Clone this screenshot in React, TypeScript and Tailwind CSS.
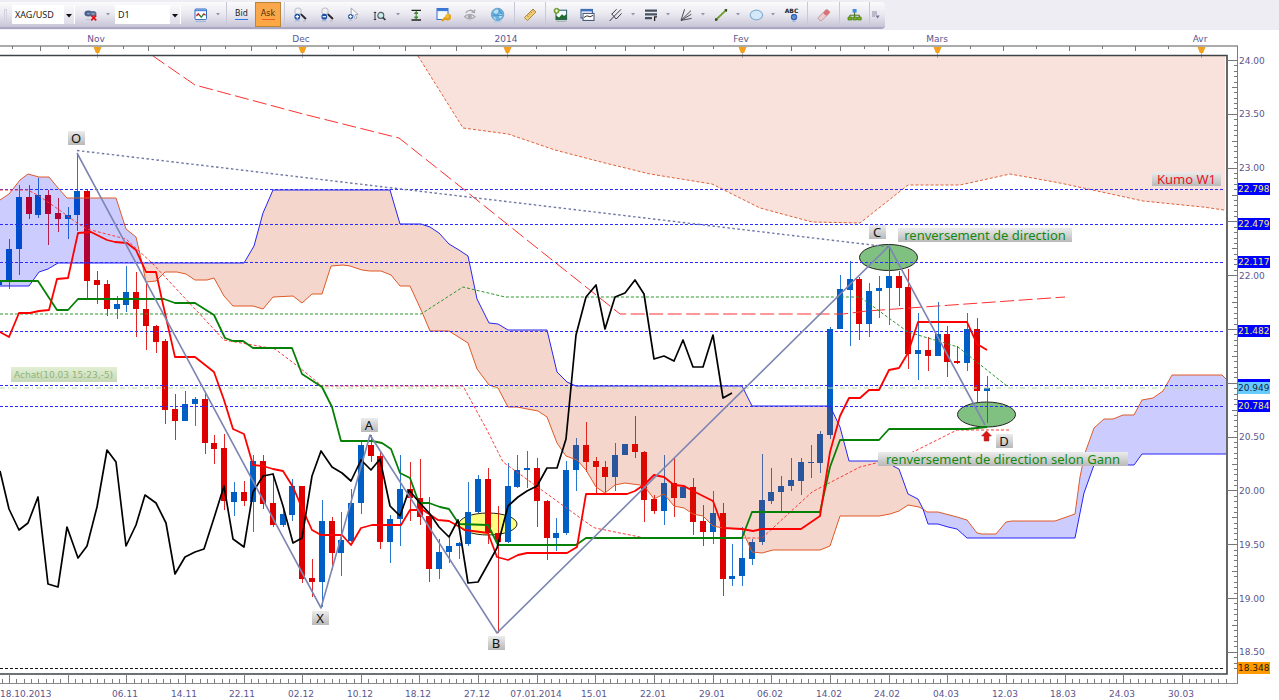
import type { ReactNode } from 'react'

/**
 * Trading chart: drawing toolbar on top, XAG/USD daily candles below with
 * Ichimoku overlays, price levels and annotations.
 */

type Candle = [high: number, top: number, bottom: number, low: number, dir: 'u' | 'd']
type Point = [number, number]

const FIRST_X = 9
const STEP = 9.775
const UP = '#005fc4'
const DOWN = '#de0000'

/* [high, body top, body bottom, low, direction], in chart units */
const candles: Candle[] = [
  [239, 249, 281, 289, 'u'], [185, 197, 249, 275, 'u'], [185, 197, 214, 219, 'd'], [178, 195, 215, 218, 'u'],
  [190, 195, 214, 245, 'd'], [198, 213, 219, 232, 'd'], [207, 215, 219, 239, 'u'], [154, 191, 215, 231, 'u'],
  [190, 191, 281, 298, 'd'], [271, 280, 285, 304, 'd'], [280, 284, 309, 316, 'd'], [296, 304, 309, 319, 'u'],
  [266, 292, 305, 312, 'u'], [272, 292, 309, 337, 'd'], [282, 309, 326, 350, 'd'], [325, 326, 342, 353, 'd'],
  [339, 341, 410, 424, 'd'], [394, 409, 421, 440, 'd'], [391, 404, 421, 421, 'u'], [397, 399, 404, 426, 'u'],
  [392, 399, 443, 454, 'd'], [435, 443, 449, 464, 'd'], [434, 448, 501, 510, 'd'], [482, 492, 502, 516, 'u'],
  [481, 492, 501, 506, 'd'], [455, 461, 502, 532, 'u'], [455, 461, 504, 509, 'd'], [473, 503, 525, 527, 'd'],
  [508, 514, 525, 527, 'u'], [479, 486, 515, 521, 'u'], [486, 486, 579, 583, 'd'], [559, 578, 582, 597, 'd'],
  [500, 521, 582, 607, 'u'], [517, 521, 553, 570, 'd'], [512, 540, 553, 576, 'u'], [489, 503, 541, 542, 'u'],
  [440, 445, 503, 514, 'u'], [435, 445, 456, 462, 'd'], [452, 456, 542, 549, 'd'], [515, 519, 542, 563, 'u'],
  [455, 489, 519, 546, 'u'], [462, 489, 498, 521, 'd'], [459, 498, 517, 525, 'd'], [497, 516, 569, 582, 'd'],
  [539, 552, 569, 579, 'u'], [535, 546, 552, 563, 'u'], [542, 543, 546, 559, 'u'], [482, 512, 544, 546, 'u'],
  [475, 479, 512, 513, 'u'], [468, 479, 533, 544, 'd'], [506, 533, 542, 633, 'd'], [463, 486, 542, 543, 'u'],
  [455, 470, 487, 488, 'u'], [451, 468, 470, 488, 'u'], [458, 468, 501, 527, 'd'], [500, 501, 538, 560, 'd'],
  [518, 533, 538, 551, 'u'], [461, 470, 533, 535, 'u'], [438, 445, 470, 491, 'u'], [422, 445, 462, 472, 'd'],
  [457, 461, 467, 493, 'd'], [461, 467, 477, 492, 'd'], [443, 455, 477, 491, 'u'], [444, 444, 455, 455, 'u'],
  [416, 444, 452, 458, 'd'], [451, 452, 500, 522, 'd'], [495, 499, 511, 514, 'd'], [455, 483, 511, 525, 'u'],
  [457, 483, 498, 517, 'd'], [485, 487, 498, 498, 'u'], [478, 487, 522, 535, 'd'], [505, 521, 532, 546, 'd'],
  [491, 513, 532, 544, 'u'], [503, 513, 579, 596, 'd'], [544, 576, 579, 586, 'u'], [527, 558, 576, 586, 'u'],
  [539, 542, 559, 565, 'u'], [454, 500, 542, 545, 'u'], [468, 492, 501, 504, 'u'], [476, 486, 492, 513, 'u'],
  [458, 480, 486, 491, 'u'], [458, 462, 481, 495, 'u'], [445, 462, 463, 478, 'u'], [431, 434, 463, 473, 'u'],
  [327, 329, 435, 439, 'u'], [275, 289, 329, 329, 'u'], [261, 279, 290, 346, 'u'], [277, 279, 324, 340, 'd'],
  [283, 291, 324, 337, 'u'], [276, 288, 291, 318, 'u'], [247, 276, 288, 325, 'u'], [271, 276, 288, 306, 'd'],
  [269, 287, 354, 369, 'd'], [313, 350, 354, 380, 'u'], [337, 350, 356, 371, 'd'], [302, 334, 356, 356, 'u'],
  [326, 334, 362, 377, 'd'], [346, 361, 363, 364, 'd'], [313, 329, 363, 371, 'u'], [318, 329, 391, 403, 'd'],
  [376, 388, 391, 423, 'u'],
]

const tenkan: Point[] = [
  [0, 332], [9, 337], [19, 313], [30, 313], [39, 311], [49, 310], [57, 279], [68, 278], [78, 233], [91, 232],
  [107, 240], [115, 242], [127, 243], [136, 250], [146, 272], [156, 272], [162, 300], [175, 357], [195, 357],
  [214, 372], [224, 400], [233, 429], [244, 434], [253, 465], [263, 466], [273, 469], [283, 471], [293, 487],
  [302, 508], [312, 530], [321, 535], [342, 535], [351, 545], [361, 528], [372, 525], [401, 525], [410, 510],
  [423, 510], [438, 520], [449, 521], [465, 530], [488, 533], [497, 557], [508, 560], [518, 555], [527, 553],
  [567, 553], [577, 547], [586, 494], [627, 494], [635, 491], [645, 484], [654, 475], [664, 477], [674, 485],
  [684, 486], [693, 491], [713, 501], [723, 528], [742, 529], [753, 531], [762, 529], [801, 529], [820, 516],
  [830, 452], [840, 416], [849, 398], [860, 398], [869, 390], [879, 390], [889, 370], [899, 368], [908, 353],
  [918, 322], [967, 322], [977, 344], [987, 350],
]

const kijun: Point[] = [
  [0, 281], [38, 281], [57, 310], [68, 310], [78, 299], [164, 299], [175, 303], [195, 303], [214, 315], [225, 338],
  [233, 341], [243, 341], [253, 348], [292, 348], [302, 374], [322, 387], [332, 407], [341, 441], [372, 441],
  [382, 443], [391, 449], [400, 473], [410, 478], [419, 503], [429, 503], [440, 507], [449, 509], [459, 524],
  [488, 525], [498, 545], [576, 545], [586, 538], [742, 538], [752, 512], [820, 512], [830, 467], [840, 440],
  [879, 440], [889, 429], [967, 429], [987, 427],
]

const chikou: Point[] = [
  [0, 471], [9, 509], [19, 530], [28, 523], [38, 497], [48, 584], [58, 587], [67, 527], [78, 558], [87, 546],
  [97, 507], [107, 450], [116, 462], [126, 546], [136, 525], [145, 495], [156, 503], [166, 523], [175, 574],
  [185, 557], [195, 552], [204, 549], [214, 518], [224, 486], [233, 539], [244, 547], [253, 492], [263, 476],
  [273, 474], [283, 506], [293, 543], [302, 538], [312, 476], [321, 451], [332, 467], [342, 473], [351, 481],
  [361, 460], [371, 470], [380, 459], [390, 506], [400, 516], [409, 490], [419, 502], [430, 514], [439, 527],
  [449, 537], [458, 520], [468, 583], [478, 582], [497, 548], [508, 506], [518, 497], [527, 491], [537, 486],
  [547, 468], [557, 468], [566, 439], [576, 335], [586, 297], [596, 285], [605, 329], [615, 297], [625, 293],
  [635, 280], [644, 294], [654, 359], [664, 356], [674, 361], [683, 340], [693, 367], [703, 367], [713, 335],
  [723, 398], [732, 393],
]

/* Senkou span A (orange) and B (blue), split where they cross */
const spanA: Point[][] = [
  [[0, 200], [9, 194], [20, 180], [28, 174], [39, 177], [49, 177], [58, 188], [67, 198], [116, 198], [126, 229], [136, 237], [142, 263]],
  [
    [142, 263], [146, 282], [156, 281], [165, 272], [177, 272], [186, 274], [195, 280], [207, 280], [214, 278],
    [224, 296], [233, 306], [253, 306], [263, 309], [273, 297], [293, 296], [302, 303], [312, 294], [322, 294],
    [331, 266], [343, 265], [350, 266], [362, 270], [370, 271], [381, 271], [391, 275], [400, 286], [410, 286],
    [422, 312], [430, 331], [449, 331], [468, 343], [477, 369], [489, 385], [498, 388], [508, 407], [517, 407],
    [538, 411], [547, 417], [557, 443], [566, 456], [577, 460], [586, 470], [596, 487], [605, 493], [615, 485],
    [625, 483], [640, 485], [645, 487], [654, 499], [664, 494], [674, 506], [684, 508], [693, 514], [703, 516],
    [713, 526], [723, 528], [742, 529], [752, 552], [762, 553], [773, 550], [820, 550], [830, 546], [840, 516],
    [879, 516], [890, 514], [899, 511], [908, 505], [919, 507], [923, 509],
  ],
  [
    [923, 509], [927, 512], [938, 512], [957, 517], [967, 520], [977, 533], [982, 534], [996, 534], [1006, 522],
    [1012, 521], [1055, 521], [1075, 514], [1080, 477], [1085, 453], [1094, 428], [1104, 419], [1113, 419],
    [1123, 415], [1134, 415], [1142, 400], [1153, 398], [1163, 391], [1172, 375], [1222, 375], [1226, 379],
  ],
]

const spanB: Point[][] = [
  [[0, 286], [29, 286], [39, 272], [48, 269], [58, 263], [142, 263]],
  [
    [142, 263], [244, 263], [254, 246], [263, 213], [273, 190], [390, 190], [400, 224], [421, 224], [430, 227],
    [439, 233], [449, 244], [459, 250], [468, 256], [477, 299], [489, 323], [498, 324], [508, 330], [547, 330],
    [557, 372], [567, 382], [576, 386], [742, 386], [752, 406], [830, 406], [840, 427], [849, 461], [889, 461],
    [893, 466], [899, 469], [908, 494], [918, 499], [923, 509],
  ],
  [
    [923, 509], [928, 524], [938, 524], [948, 527], [957, 529], [967, 538], [1075, 538], [1084, 493], [1094, 465],
    [1134, 465], [1142, 454], [1226, 454],
  ],
]

const cloudFills = ['#0000ff', '#cd3200', '#0000ff']

const weeklyKumo: Point[] = [
  [418, 56], [463, 128], [508, 134], [555, 150], [605, 163], [650, 174], [712, 184], [760, 208], [812, 222],
  [860, 223], [908, 185], [960, 185], [1010, 174], [1060, 183], [1097, 191], [1143, 201], [1183, 205], [1203, 207],
  [1224, 210],
]

const dailyTenkanW: Point[] = [
  [0, 190], [28, 190], [39, 196], [58, 209], [77, 223], [87, 229], [126, 239], [153, 264], [224, 340], [253, 345],
  [275, 349], [300, 368], [322, 386], [463, 386], [487, 430], [503, 462], [590, 525], [595, 528], [645, 538],
  [762, 538], [812, 492], [833, 481], [860, 467], [880, 462], [913, 452], [957, 430], [1011, 430],
]

const weeklyKijun: Point[] = [
  [0, 314], [421, 314], [463, 287], [505, 297], [860, 297], [908, 332], [958, 347], [1007, 386],
]

const monthlyLine: Point[] = [
  [153, 56], [195, 85], [303, 114], [399, 138], [457, 184], [537, 248], [620, 314], [843, 314], [867, 311], [1065, 297],
]

const levels = [189.5, 224.5, 262.5, 331.5, 385.5, 406.5]

const priceLabels: { text: string; y: number }[] = [
  { text: '24.00', y: 61 },
  { text: '23.50', y: 114 },
  { text: '23.00', y: 168 },
  { text: '22.00', y: 276 },
  { text: '20.50', y: 437 },
  { text: '20.00', y: 491 },
  { text: '19.50', y: 545 },
  { text: '19.00', y: 599 },
  { text: '18.50', y: 652 },
]

const priceTags = [
  { text: '22.798', y: 189, fill: '#0000ff', color: '#f2f26a' },
  { text: '22.479', y: 224, fill: '#0000ff', color: '#f2f26a' },
  { text: '22.117', y: 262, fill: '#0000ff', color: '#f2f26a' },
  { text: '21.482', y: 331, fill: '#0000ff', color: '#f2f26a' },
  { text: '', y: 385, fill: '#0000ff', color: '#f2f26a' },
  { text: '20.949', y: 388, fill: '#66ccff', color: '#10243c' },
  { text: '20.784', y: 406, fill: '#0000ff', color: '#f2f26a' },
  { text: '18.348', y: 668, fill: '#ff9900', color: '#2a1a00' },
]

const months = [
  { text: 'Nov', x: 97, label: 96 },
  { text: 'Dec', x: 302, label: 301 },
  { text: '2014', x: 507, label: 506 },
  { text: 'Fev', x: 742, label: 741 },
  { text: 'Mars', x: 937, label: 937 },
  { text: 'Avr', x: 1201, label: 1200 },
]

const dates = [
  '06.11', '14.11', '22.11', '02.12', '10.12', '18.12', '27.12', '07.01.2014', '15.01', '22.01',
  '29.01', '06.02', '14.02', '24.02', '04.03', '12.03', '18.03', '24.03', '30.03',
]

const marks = [
  { text: 'O', x: 76, y: 138 },
  { text: 'X', x: 320, y: 618 },
  { text: 'A', x: 369, y: 425 },
  { text: 'B', x: 496, y: 643 },
  { text: 'C', x: 877, y: 232 },
  { text: 'D', x: 1004, y: 441 },
]

const notes = [
  { text: 'renversement de direction', x: 898, y: 228, width: 174, color: '#128a12' },
  { text: 'renversement de direction selon Gann', x: 878, y: 452, width: 250, color: '#128a12' },
  { text: 'Kumo W1', x: 1152, y: 172, width: 69, color: '#f01020' },
]

const toPoints = (line: Point[]) => line.map((p) => p.join(',')).join(' ')

/* ── Toolbar ── */

function Icon({ children }: { children: ReactNode }) {
  return (
    <svg viewBox="0 0 16 16" className="size-4" fill="none" aria-hidden="true">
      {children}
    </svg>
  )
}

function ToolButton({ label, className = '', children }: { label: string; className?: string; children: ReactNode }) {
  return (
    <button type="button" aria-label={label} className={`flex h-full w-[27px] shrink-0 items-center justify-center ${className}`}>
      {children}
    </button>
  )
}

function MenuArrow({ label }: { label: string }) {
  return (
    <button type="button" aria-label={label} className="flex h-full w-2 shrink-0 items-center justify-center">
      <svg viewBox="0 0 4 3" className="h-[3px] w-1" aria-hidden="true">
        <path d="M0 0h4L2 2.5z" fill="#9492ac" />
      </svg>
    </button>
  )
}

function Separator({ className = '' }: { className?: string }) {
  return <span className={`h-full w-px shrink-0 border-l border-[#c9c8d8] ${className}`} />
}

function Combo({ id, label, value, className }: { id: string; label: string; value: string; className: string }) {
  return (
    <div className={`relative h-[19px] shrink-0 bg-white ${className}`}>
      <label htmlFor={id} className="sr-only">{label}</label>
      <select
        id={id}
        defaultValue={value}
        className="block h-full w-full appearance-none bg-white pl-[3px] font-['Noto_Sans'] text-[9px] leading-[18px] text-[#1b1b1b] outline-none"
      >
        <option>{value}</option>
      </select>
      <span className="pointer-events-none absolute right-px top-0 flex h-full w-[10px] items-center justify-center bg-linear-to-b from-[#fafafc] to-[#dddce8]">
        <svg viewBox="0 0 6 4" className="mt-[2px] h-1 w-[6px]" aria-hidden="true">
          <path d="M0 0h6L3 3.6z" fill="#111" />
        </svg>
      </span>
    </div>
  )
}

function ZoomIcon({ minus = false }: { minus?: boolean }) {
  return (
    <Icon>
      <circle cx="6" cy="4.2" r="3.2" fill="#eef0f3" stroke="#c2c4cb" strokeWidth="1.2" />
      <path d="M9.4 7.6l4 3.8" stroke="#26282e" strokeWidth="2" strokeLinecap="round" />
      <circle cx="5.3" cy="9.7" r="2.9" fill="#1c4fa8" />
      <path d={minus ? 'M3.6 9.7h3.4' : 'M3.6 9.7h3.4M5.3 8v3.4'} stroke="#fff" strokeWidth="1.2" />
      <path d="M3 14.4c1.2-1.2 3.4-1.2 4.6 0" stroke="#9fb2dc" strokeWidth="1.2" />
      <path d="M11 14.2l3-.6" stroke="#b3b3c0" />
    </Icon>
  )
}

function Toolbar() {
  return (
    <div className="flex h-[30px] bg-[#eeedf3] pt-[2px]">
      <div
        role="toolbar"
        aria-label="Chart tools"
        className="flex h-[27px] w-[885px] shrink-0 items-stretch rounded-r-sm border-b-2 border-[#aaa7c3] bg-linear-to-b from-[#fbfbfd] via-[#e9e8f0] to-[#c7c5d6] pl-1"
      >
        <span className="mr-[5px] h-3 w-[3px] shrink-0 self-center border border-[#d3d2de]" />
        <Combo id="instrument" label="Instrument" value="XAG/USD" className="mt-[3px] w-[63px]" />
        <ToolButton label="Unlink chart" className="ml-[2px]">
          <Icon>
            <ellipse cx="5.4" cy="6.6" rx="2.9" ry="1.9" fill="#8fa2c0" stroke="#46618e" strokeWidth="2.2" />
            <ellipse cx="10" cy="6.8" rx="2.6" ry="1.8" fill="#8fa2c0" stroke="#5a6f92" strokeWidth="1.8" />
            <path d="M8.2 8.4l5 5M13.2 8.4l-5 5" stroke="#e0121c" strokeWidth="1.8" />
            <path d="M3 12.6h4" stroke="#b9c0d2" />
          </Icon>
        </ToolButton>
        <MenuArrow label="Link options" />
        <Combo id="period" label="Period" value="D1" className="ml-[3px] mt-[3px] w-[66px]" />
        <ToolButton label="Chart type" className="ml-[6px]">
          <Icon>
            <rect x="2" y="2" width="11.5" height="10.6" rx="1" fill="#fff" stroke="#2f69c0" />
            <path d="M2 2.6h11.5v1.6H2z" fill="#4a86de" />
            <path d="M3.4 9l1.8-2.2 1.8 2M9.4 8.6l1.4-1.8 1.8 1.4" stroke="#c22020" strokeWidth="1.3" />
            <path d="M6.8 8.4l1.5 1.8 1.6-2" stroke="#1a8d2c" strokeWidth="1.3" />
            <path d="M2.5 14.6h10.5" stroke="#9db8de" />
          </Icon>
        </ToolButton>
        <MenuArrow label="Chart type options" />
        <Separator className="ml-1 mr-px" />
        <button
          type="button"
          className="flex h-full w-[27px] shrink-0 flex-col items-center justify-center font-['DejaVu_Sans'] text-[8px] leading-[9px] text-[#222]"
        >
          Bid
          <span className="mt-px h-px w-[13px] bg-[#2d7be8]" />
        </button>
        <button
          type="button"
          className="flex h-[25px] w-[26px] shrink-0 flex-col items-center justify-center border border-[#b98536] bg-linear-to-b from-[#f9a64e] to-[#fca842] font-['DejaVu_Sans'] text-[8px] leading-[9px] text-[#4e2c08]"
        >
          Ask
          <span className="mt-px h-px w-[13px] bg-[#f25b22]" />
        </button>
        <Separator className="ml-[3px] mr-px" />
        <ToolButton label="Zoom in"><ZoomIcon /></ToolButton>
        <ToolButton label="Zoom out"><ZoomIcon minus /></ToolButton>
        <ToolButton label="Select and zoom">
          <Icon>
            <path d="M5.2 1v9l2.3-2 1.7 3.8 1.8-.8-1.8-3.5h3z" fill="#f8f8fa" stroke="#9fa0aa" strokeWidth=".9" />
            <circle cx="4.6" cy="9.6" r="2.6" fill="#3763ab" />
            <path d="M3 9.6h3.2M4.6 8v3.2" stroke="#fff" />
            <path d="M3 14c1-1 2.4-1 3.4 0" stroke="#a6b8dd" />
          </Icon>
        </ToolButton>
        <ToolButton label="Zoom range">
          <Icon>
            <path d="M2 5v8M.8 5.4h2.4M.8 12.6h2.4" stroke="#333" strokeWidth="1" />
            <circle cx="7.8" cy="8.4" r="3" fill="#c8ecec" stroke="#555b61" strokeWidth="1.1" />
            <path d="M10 10.6l2.4 2.4" stroke="#333" strokeWidth="1.6" />
          </Icon>
        </ToolButton>
        <MenuArrow label="Zoom range options" />
        <ToolButton label="Auto scale">
          <Icon>
            <path d="M3.5 3.4h9.5M3.5 13h9.5" stroke="#222" strokeWidth="1.4" />
            <path d="M8.2 4.6v7M6.4 6.4l1.8-1.8L10 6.4zM6.4 10l1.8 1.8L10 10z" fill="#3d9a35" stroke="#3d8a2a" />
          </Icon>
        </ToolButton>
        <ToolButton label="Lock window">
          <Icon>
            <rect x="2" y="1.5" width="11" height="11" fill="#f4f8ff" stroke="#3c6fc8" />
            <path d="M2 1.5h11v2.6H2z" fill="#3c78d8" />
            <path d="M13 7.6a2.4 2.4 0 1 1-2.6 3L7 14" stroke="#e7a215" strokeWidth="2.2" />
            <circle cx="12.2" cy="9" r="2" fill="#f5bc35" />
          </Icon>
        </ToolButton>
        <ToolButton label="Show all" className="text-[#a6a6ad]">
          <Icon>
            <path d="M2.6 9.6c2.4-3 8-3 10.4 0-2.4 2.8-8 2.8-10.4 0z" stroke="currentColor" strokeWidth="1.4" />
            <circle cx="7.8" cy="9.4" r="2" fill="currentColor" />
            <path d="M3.6 6c2.2-3.4 6.4-3.4 8.2-1.2M12.8 2.4l-.4 3-2.9-.6" stroke="currentColor" strokeWidth="1.3" />
            <path d="M5 13.8h5" stroke="#cfcfd8" />
          </Icon>
        </ToolButton>
        <ToolButton label="Web">
          <Icon>
            <circle cx="8.6" cy="7.4" r="6.2" fill="#69b0dd" stroke="#5f97c2" strokeWidth=".8" />
            <path d="M4.4 4.6c2-2.6 5-2.6 5.4-1.4-1.6 1.4.2 2.2-1.8 3.2-1.6 1-3.4-.2-3.6-1.8zM10 7.6c2.2-1 3.4-.2 3.6 1-1 2.6-2.4 3.2-3.4 2.2zM4.2 9.4l2.4 1 .4 2.2c-1.4-.6-2.4-1.6-2.8-3.2z" fill="#b8e0f4" />
            <path d="M9.4 1.6l3.2 5.6M4 8l9.6.6" stroke="#3b85bd" strokeWidth=".8" />
            <path d="M4.6 14.8h8" stroke="#a9cdea" strokeWidth="1.2" />
          </Icon>
        </ToolButton>
        <Separator className="ml-1" />
        <ToolButton label="Measure" className="ml-px">
          <Icon>
            <path d="M2.4 10.6L11 2l3 3-8.6 8.6z" fill="#f0cd77" stroke="#b48a37" />
            <path d="M5 8.4l1.4 1.4M6.8 6.6L8 7.8M8.6 4.8l1.4 1.4M10.4 3l1.2 1.2" stroke="#8f6b22" strokeWidth=".8" />
          </Icon>
        </ToolButton>
        <Separator className="ml-[2px]" />
        <ToolButton label="Add indicator">
          <Icon>
            <rect x="4" y="3.2" width="10.6" height="9.4" fill="#f4fbff" stroke="#25586b" />
            <path d="M4 12.6V8.4l3 2 3-3.2 2 1.8 2.6-2v5.6z" fill="#226c30" />
            <circle cx="4.6" cy="3.8" r="2.6" fill="#86b832" stroke="#4c7c18" strokeWidth=".6" />
            <path d="M3.2 3.8H6M4.6 2.4v2.8" stroke="#fff" strokeWidth=".9" />
            <path d="M4.4 14.4h10" stroke="#9dbba5" />
          </Icon>
        </ToolButton>
        <ToolButton label="Indicator windows">
          <Icon>
            <rect x="2" y="2.4" width="11.4" height="8.6" fill="#eef4ff" stroke="#32588f" />
            <path d="M2 3.4h11.4" stroke="#3b73c8" strokeWidth="2" />
            <rect x="4" y="6.4" width="11" height="7" fill="#fff" stroke="#3d4e6d" />
            <path d="M5 10.4l3-1.6 3 1 3-1.4" stroke="#333" />
          </Icon>
        </ToolButton>
        <ToolButton label="Pitchfork" className="ml-[2px] text-[#3a3a40]">
          <Icon>
            <path d="M1.6 14L6 9.4M3.6 6.8L8.2 12M3.8 7.2L8.6 2.2M6 9.4l7-7M8.2 12l5.4-5.6" stroke="currentColor" strokeWidth="1" />
          </Icon>
        </ToolButton>
        <MenuArrow label="Pitchfork options" />
        <ToolButton label="Horizontal levels" className="text-[#46525f]">
          <Icon>
            <path d="M2 3.6h12M2 7.4h12M2 11.2h7" stroke="currentColor" strokeWidth="2.2" />
            <path d="M11.6 14V9.8h2.4" stroke="#222" strokeWidth="1.3" />
          </Icon>
        </ToolButton>
        <MenuArrow label="Level options" />
        <ToolButton label="Fan" className="text-[#4d4d55]">
          <Icon>
            <path d="M3 13.4L6.6 2.2M3 13.4l10-9.8M3 13.4l10.4-6.2M3 13.4l10.6-2" stroke="currentColor" strokeWidth="1" />
          </Icon>
        </ToolButton>
        <MenuArrow label="Fan options" />
        <ToolButton label="Line">
          <Icon>
            <path d="M3.4 12.4l9.4-9" stroke="#6c9f2b" strokeWidth="2" />
            <path d="M2.4 13.4l2-.4-1.6-1.6zM13.8 2.4l-2 .4 1.6 1.6z" fill="#33431c" stroke="#33431c" />
          </Icon>
        </ToolButton>
        <MenuArrow label="Line options" />
        <ToolButton label="Ellipse">
          <Icon>
            <ellipse cx="8.4" cy="8" rx="6.2" ry="4.8" fill="#d3e8f8" stroke="#88add0" strokeWidth="1.2" />
          </Icon>
        </ToolButton>
        <MenuArrow label="Shape options" />
        <button
          type="button"
          aria-label="Text label"
          className="ml-px flex h-full w-[27px] shrink-0 flex-col items-center pt-[6px] font-['DejaVu_Sans'] text-[6px] font-bold leading-[6px] text-[#222]"
        >
          ABC
          <svg viewBox="0 0 8 8" className="ml-1 size-2" aria-hidden="true">
            <circle cx="4" cy="3" r="2.4" fill="#fff" stroke="#2c61b8" strokeWidth="1.6" />
            <path d="M4 1.6v3M2.5 3h3" stroke="#2c61b8" />
            <path d="M2.4 7.2h3.2" stroke="#89a5d9" />
          </svg>
        </button>
        <Separator className="ml-[2px]" />
        <ToolButton label="Erase" className="ml-[2px]">
          <Icon>
            <path d="M2.2 10.6L10 2.8c1-.8 4.4 1.6 3.6 3L6 13.4c-1.2.8-4.6-1.4-3.8-2.8z" fill="#eecccf" stroke="#b08c94" strokeWidth=".8" />
            <path d="M7.4 5.4L10 2.8c1-.8 4.4 1.6 3.6 3L11 8.6c-1.6 0-3.4-1.4-3.6-3.2z" fill="#da7277" />
          </Icon>
        </ToolButton>
        <Separator className="ml-[2px]" />
        <ToolButton label="Object tree">
          <Icon>
            <path d="M8.6 5v3M3.8 11V8.2h9.6V11M8.6 8v3" stroke="#4c6c1c" strokeWidth="1" />
            <rect x="6.6" y="2" width="4" height="3.6" fill="#3c8fe0" />
            <path d="M2 10h3.8v3H2zM6.8 10h3.8v3H6.8zM11.6 10h3.6v3h-3.6z" fill="#74b01f" stroke="#4b7b10" strokeWidth=".7" />
          </Icon>
        </ToolButton>
        <Separator className="ml-[2px]" />
        <button type="button" aria-label="More tools" className="flex h-full w-3 shrink-0 items-center justify-center">
          <svg viewBox="0 0 8 8" className="size-2" aria-hidden="true">
            <path d="M0 1h5M0 3h5M0 5h3" stroke="#8c8aa6" />
            <path d="M3.4 4.6h4.4L5.6 7.4z" fill="#77758f" />
          </svg>
        </button>
      </div>
    </div>
  )
}

/* ── Axes ── */

function TimeAxisTop() {
  const ticks: { x: number; long: boolean }[] = [
    { x: 12, long: false },
    { x: 40, long: true },
    { x: 68, long: false },
  ]
  for (let m = 0; m < months.length - 1; m++) {
    const from = months[m].x
    const gap = (months[m + 1].x - from) / 8
    for (let i = 1; i < 8; i++) ticks.push({ x: from + gap * i, long: i % 2 === 0 })
  }

  return (
    <g>
      <path d="M0 46H1238" stroke="#8f8f8f" strokeWidth="1.6" />
      {ticks.map((t) => (
        <path key={t.x} d={`M${Math.round(t.x) + 0.5} 46v${t.long ? 5 : 3}`} stroke="#777" />
      ))}
      {months.map((m) => (
        <g key={m.text}>
          <text x={m.label} y="42" textAnchor="middle" fill="#5b568e">{m.text}</text>
          <path d={`M${m.x + 0.5} 50v8`} stroke="#aeb6c4" />
          <path d={`M${m.x - 3.5} 47h8l-2.4 6h-3.2z`} fill="#f5a01c" />
        </g>
      ))}
    </g>
  )
}

function TimeAxisBottom() {
  return (
    <g>
      <path d="M0 683.5H1238" stroke="#8a8a8a" />
      {Array.from({ length: 168 }, (_, i) => i).map((i) => {
        const x = Math.round(FIRST_X + (i - 1) * 7.33) + 0.5
        const major = (i - 1) % 8 === 0
        return <path key={i} d={`M${x} 683V${major ? 674 : 679}`} stroke="#7d7d7d" />
      })}
      <text x="0" y="697" fill="#5b568e">18.10.2013</text>
      {dates.map((d, k) => (
        <text key={d} x={Math.round(125 + k * 58.65)} y="697" textAnchor="middle" fill="#5b568e">
          {d}
        </text>
      ))}
    </g>
  )
}

function PriceAxis() {
  return (
    <g>
      <path d="M1237.5 46V684" stroke="#7c7c7c" />
      {Array.from({ length: 114 }, (_, i) => i).map((i) => {
        const length = i % 10 === 0 ? 10 : i % 5 === 0 ? 5 : 3
        const y = Math.round(60 + i * 5.38) + 0.5
        return <path key={i} d={`M1237 ${y}h${-length}`} stroke="#777" />
      })}
      {priceLabels.map((p) => (
        <text key={p.text} x="1239" y={p.y + 3} fill="#5b568e">{p.text}</text>
      ))}
      {priceTags.map((t) => (
        <g key={t.y}>
          <rect x="1238" y={t.y - 6} width="32" height="12" fill={t.fill} />
          <text x="1238" y={t.y + 3} fill={t.color}>{t.text}</text>
        </g>
      ))}
    </g>
  )
}

/* ── Plot ── */

function Clouds() {
  return (
    <g>
      <polygon points={`${toPoints(weeklyKumo)} 1225,210 1225,56`} fill="#cd3200" fillOpacity=".14" />
      <polyline points={toPoints(weeklyKumo)} stroke="#e0623a" strokeDasharray="3 2" />
      {spanA.map((a, i) => (
        <g key={i}>
          <polygon points={toPoints([...a, ...[...spanB[i]].reverse()])} fill={cloudFills[i]} fillOpacity=".2" />
          <polyline points={toPoints(a)} stroke="#e05a28" />
          <polyline points={toPoints(spanB[i])} stroke="#2626f5" />
        </g>
      ))}
    </g>
  )
}

function Candles() {
  return (
    <g shapeRendering="crispEdges">
      <rect x="0" y="281" width="2" height="4" fill={UP} />
      {candles.map(([high, top, bottom, low, dir], i) => {
        const x = Math.round(FIRST_X + i * STEP)
        const color = dir === 'u' ? UP : DOWN
        return (
          <g key={i} fill={color}>
            <rect x={x} y={high} width="1" height={low - high} opacity=".85" />
            <rect x={x - 3} y={top} width="6" height={bottom - top} />
          </g>
        )
      })}
    </g>
  )
}

function Chart() {
  return (
    <svg
      viewBox="0 30 1279 670"
      className="block h-auto w-full bg-white font-['DejaVu_Sans'] text-[9px]"
      role="img"
      aria-label="XAG/USD daily chart"
      fill="none"
    >
      <defs>
        <linearGradient id="tag" x1="0" y1="0" x2="0" y2="1">
          <stop offset="0" stopColor="#ececec" />
          <stop offset="1" stopColor="#b9b9b9" />
        </linearGradient>
        <linearGradient id="order" x1="0" y1="0" x2="0" y2="1">
          <stop offset="0" stopColor="#e2efd4" />
          <stop offset="1" stopColor="#c6d8b6" />
        </linearGradient>
      </defs>

      <TimeAxisTop />

      {/* Highlights behind the candles */}
      <g stroke="#222">
        <ellipse cx="488" cy="524" rx="29" ry="11" fill="#ffff80" />
        <ellipse cx="888.5" cy="257.5" rx="29" ry="13" fill="#80c080" />
        <ellipse cx="986.5" cy="414.5" rx="29" ry="12.5" fill="#80c080" />
      </g>

      <Candles />
      <Clouds />

      {/* Price levels */}
      {levels.map((y) => (
        <path key={y} d={`M0 ${y}H1225`} stroke="#2a2aff" strokeDasharray="3 2" />
      ))}
      <path d="M0 388H1225" stroke="#bcdca6" strokeDasharray="5 3 1 3" />
      <path d="M0 668.5H1225" stroke="#111" strokeDasharray="3 2" />

      {/* Higher timeframe lines */}
      <polyline points={toPoints(monthlyLine)} stroke="#ff3030" strokeDasharray="14 4.5" />
      <polyline points={toPoints(dailyTenkanW)} stroke="#ff3a3a" strokeDasharray="3 2" />
      <polyline points={toPoints(weeklyKijun)} stroke="#2c962c" strokeDasharray="3 2" />

      <g strokeLinejoin="round">
        <polyline points={toPoints(kijun)} stroke="#068006" strokeWidth="1.8" />
        <polyline points={toPoints(tenkan)} stroke="#ff0000" strokeWidth="1.8" />
        <polyline points={toPoints(chikou)} stroke="#000" strokeWidth="1.7" />
        <polyline points="77,153 321,608 370,435 497,633 889,246 985,425" stroke="#7d86b2" strokeWidth="1.6" />
      </g>
      <path d="M77 150.5L889 247" stroke="#7079a6" strokeWidth="1.4" strokeDasharray="2.5 2.5" />

      {/* Entry arrow */}
      <path d="M986.5 431l5 5h-2.6v5h-4.8v-5h-2.6z" fill="#dd1515" stroke="#8c1c1c" strokeWidth=".5" />

      {/* Annotations */}
      <g className="font-['Noto_Sans'] text-[13px]">
        {marks.map((m) => (
          <g key={m.text}>
            <rect x={m.x - 8} y={m.y - 7} width="17" height="14" fill="url(#tag)" />
            <text x={m.x} y={m.y + 5} textAnchor="middle" fill="#111">{m.text}</text>
          </g>
        ))}
        {notes.map((n) => (
          <g key={n.text}>
            <rect x={n.x} y={n.y} width={n.width} height="14" fill="url(#tag)" />
            <text x={n.x + n.width / 2} y={n.y + 12} textAnchor="middle" fill={n.color}>{n.text}</text>
          </g>
        ))}
      </g>
      <rect x="11" y="367" width="106" height="15" fill="url(#order)" />
      <text x="14" y="378" fill="#8fb577">Achat(10.03 15:23,-5)</text>

      {/* Plot frame */}
      <path d="M0 55.5H1227V674H0" stroke="#3f4448" strokeWidth="1.6" />

      <TimeAxisBottom />
      <PriceAxis />
    </svg>
  )
}

export default function App() {
  return (
    <main className="min-h-screen bg-white">
      <Toolbar />
      <Chart />
    </main>
  )
}
